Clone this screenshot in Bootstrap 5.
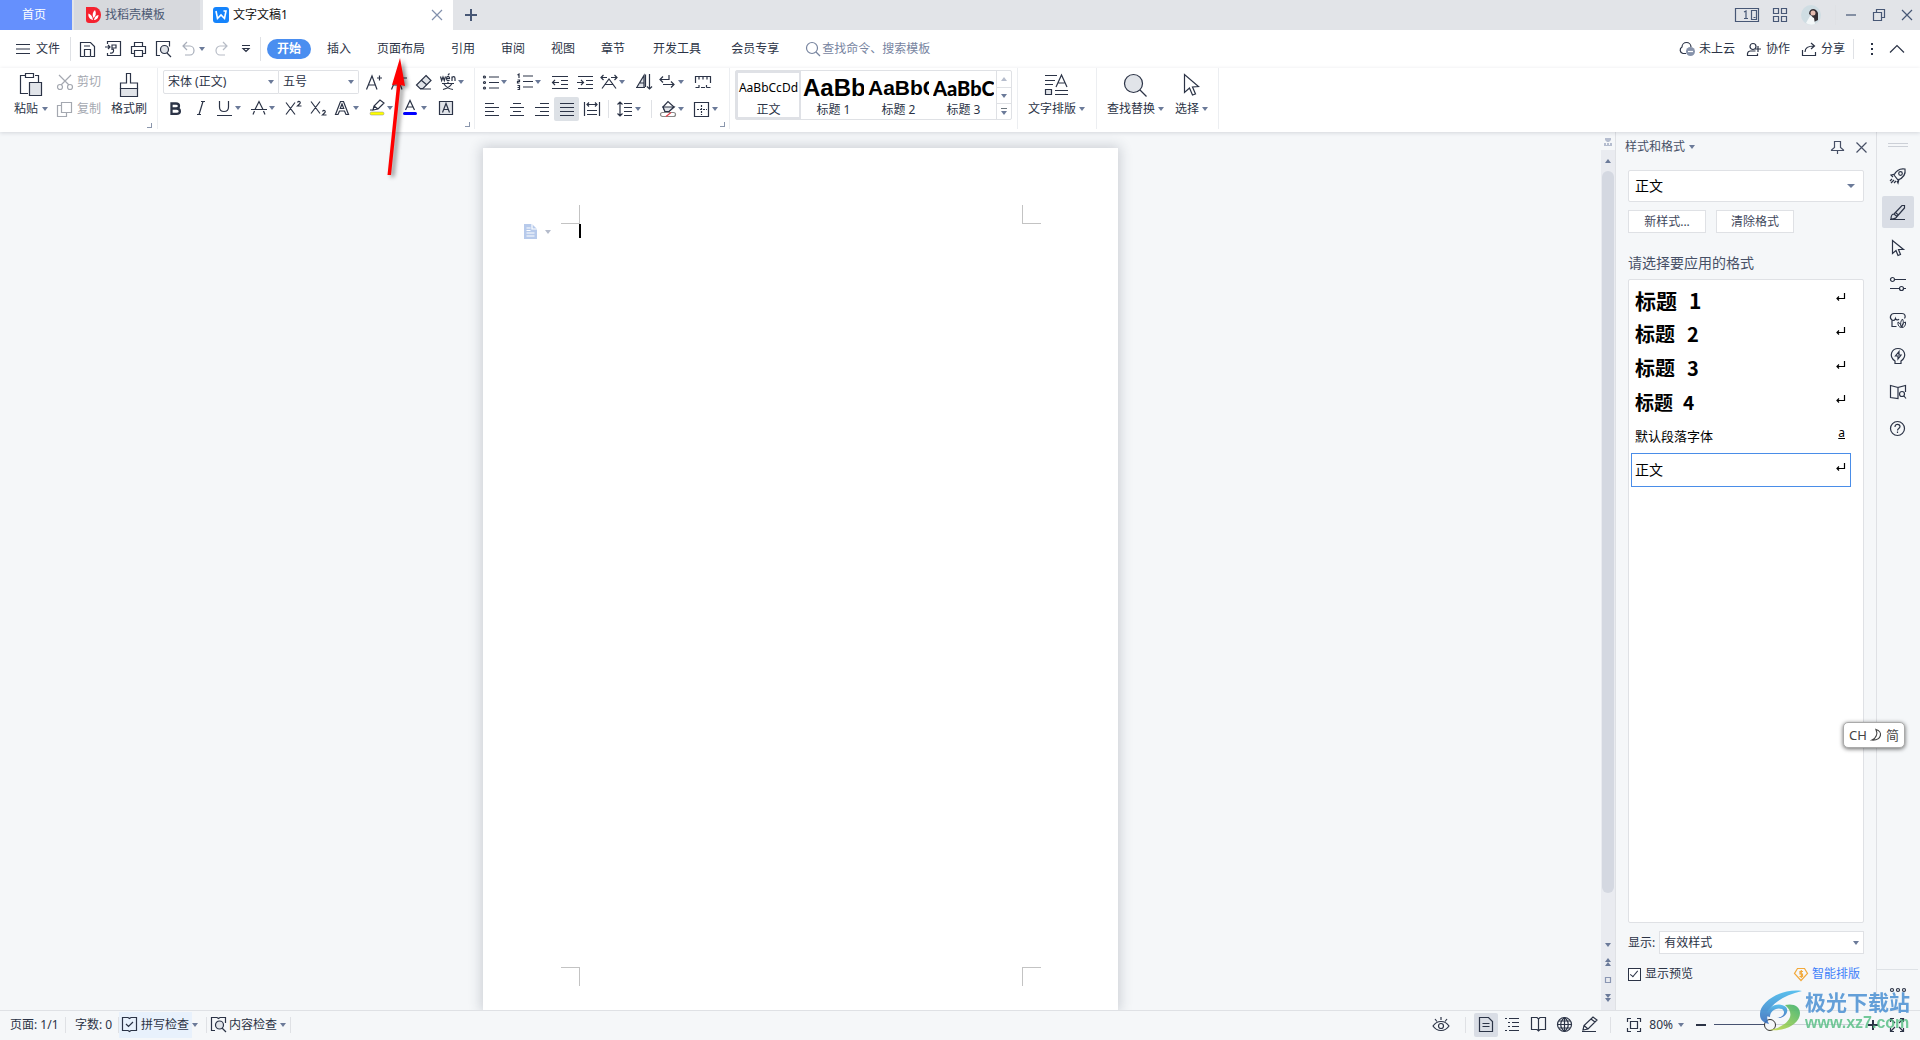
<!DOCTYPE html>
<html lang="zh-CN">
<head>
<meta charset="utf-8">
<meta name="viewport" content="width=device-width, initial-scale=1">
<title>文字文稿1</title>
<link href="https://cdn.jsdelivr.net/npm/bootstrap@5.3.0/dist/css/bootstrap.min.css" rel="stylesheet">
<style>
:root{--ink:#2b3346;--soft:#6b7a99;--line:#dfe1e5;--pale:#f5f7f9}
body{font:12px/16px "Noto Sans","Noto Sans CJK SC",sans-serif;color:var(--ink);background:var(--pale);overflow:hidden}
body,button,select,input{font-family:"Noto Sans","Noto Sans CJK SC",sans-serif}
button{border:0;background:none;padding:0;color:inherit;font-size:12px;line-height:16px;white-space:nowrap}
a{color:inherit;text-decoration:none}
svg{display:block;flex:none;fill:none;stroke:currentColor;stroke-width:1.2;overflow:visible}
svg.pic{stroke:none}
svg .fl{fill:#e1e4e9}
svg .solid{fill:currentColor;stroke:none}
.tri{display:block;flex:none;width:0;height:0;border:3px solid transparent;border-top:4px solid var(--soft);border-bottom:0}
.tri.up{border-top:0;border-bottom:4px solid var(--soft)}
.rule{width:1px;background:var(--line);flex:none}
/* title bar */
.titlebar{height:30px;background:#e2e4e8;color:#475775}
.doc-tab{height:30px;gap:4px}
.tab-home{width:72px;background:#6590fd;color:#fff;padding-right:4px}
.tab-shop{width:126px;background:#d7d9dd;color:#4b5873;padding-left:12px;margin-left:2px}
.tab-doc{width:250px;background:#fff;color:#111;padding:0 11px 0 10px;margin-left:3px}
.win{gap:17px;padding-right:8px}
.win-apps{gap:14px;margin-right:-7px}
/* menu */
.menubar{height:38px;background:#fff}
.quick{gap:10px;padding-left:9px;width:189px}
.menu-tab{padding:0 13px}
.menu-tab.active{background:#4a8ef0;color:#fff;font-weight:700;border-radius:10px;height:20px;padding:0 10px;margin:0 3px 0 6px}
.menu-tab.menu-wide{padding:0 15px}
.menu-find{color:#77849f;margin-left:12px}
/* ribbon */
.ribbon{height:64px;background:#fff;box-shadow:0 1px 4px rgba(40,50,70,.16);z-index:2;position:relative}
.ribbon .rule{height:61px;background:#eceef1}
.group{padding:5px 0 0 10px}
.tools{height:26px}
.tool{width:25px;height:24px;display:flex;align-items:center;justify-content:center;flex:none}
.tool.dd{width:34px;padding:0 6px 0 4px;justify-content:space-between}
.tool.on{background:#dde1e6;border-radius:2px}
.tools .rule{height:18px;margin:0 4px;background:var(--line)}
.corner{width:5px;height:5px;border:solid #8a96ac;border-width:0 1px 1px 0}
.big{height:44px;display:flex;flex-direction:column;align-items:center;justify-content:space-between}
.clip{height:44px;color:#a4a8b0;gap:11px;padding:0 2px 0 9px}
.pick{position:relative;background:#fff;border:1px solid var(--line)}
.pick select{appearance:none;border:0;background:none;width:100%;height:100%;padding:0 4px;font-size:12px;color:var(--ink);outline:0}
.pick::after{content:"";position:absolute;right:4px;top:50%;margin-top:-2px;border:3px solid transparent;border-top:4px solid var(--soft);border-bottom:0;pointer-events:none}
.pick-font{width:116px;height:24px;border-radius:2px 0 0 2px}
.pick-size{width:80px;height:24px;border-left:0;border-radius:0 2px 2px 0;margin-right:2px}
.gallery{height:50px;border:1px solid var(--line);border-radius:2px}
.sample{width:65px;height:48px;overflow:hidden;display:flex;flex-direction:column;justify-content:space-between;align-items:center;padding-bottom:1px}
.sample .pv{display:block;width:61px;height:30px;line-height:34px;overflow:hidden;color:#000;text-align:left}
.sample.on{outline:2px solid #dfe1e6;outline-offset:-2px}
.sample .pv-n{font-size:12px;text-align:center}
.pv-1{font:700 24px "Liberation Sans",sans-serif}
.pv-2{font:700 21px "Liberation Sans",sans-serif}
.pv-3{font:900 20px Lato,sans-serif}
.gal-nav{width:15px;border-left:1px solid var(--line)}
.gal-nav button{height:16px;display:flex;flex-direction:column;align-items:center;justify-content:center;gap:2px;width:100%}
.gal-nav button+button{border-top:1px solid var(--line)}
/* work area */
.canvas{padding-top:16px}
.sheet{width:635px;background:#fff;box-shadow:0 0 12px 2px rgba(40,50,70,.2);padding:57px 0 24px}
.marks{padding:0 77px 0 78px}
.mk{width:19px;height:19px;border:0 solid #c3c3c3}
.mk-tl{border-width:0 1px 1px 0}.mk-tr{border-width:0 0 1px 1px}
.mk-bl{border-width:1px 1px 0 0}.mk-br{border-width:1px 0 0 1px}
.entry{padding-left:41px;height:15px}
.caret-bar{width:2px;height:14px;background:#000}
.scroller{width:14px;color:#8a96b3}
.track{background:#e9ebf0}
.track-top{height:21px}
.thumb{height:94.5%;width:12px;border-radius:6px;background:#d4d8e1}
.track-end{gap:11px;padding:8px 0}
.side{width:261px;border-left:1px solid var(--line);padding:0 12px}
.side-head{height:30px;margin:0 -3px;color:#475066}
.side .pick-now{height:32px;border-radius:2px}
.pick-now select{font-size:14px;color:#000;padding:0 6px}
.pick-now::after{right:8px;border-width:4px 4px 0}
.flat{width:78px;height:23px;background:#fff;border:1px solid var(--line);color:#3f485c}
.ask{font-size:14px;color:#475066;padding:22px 0 8px}
.list{background:#fff;border:1px solid var(--line);border-radius:2px;padding:3px 2px}
.list button{width:220px;height:34px;padding:0 5px 0 3px;display:flex;align-items:center;justify-content:space-between;color:#000;border:1px solid transparent;border-radius:0}
.list button.on{border-color:#4a8de8}
.list button svg,.list u{margin-bottom:6px}
.t-head{display:flex;gap:12px;font:700 21px/24px "Noto Sans CJK SC",sans-serif}
.t-sub{font-size:20px}
.t-min{font-size:19px;gap:10px}
.t-body{font-size:14px}
.t-def{font-size:13px}
.pick-show{height:23px}
.side-foot{height:56px;padding-bottom:16px}
.tick{appearance:none;width:13px;height:13px;border:1px solid var(--ink);background:#fff;margin:0;position:relative}
.tick:checked::after{content:"";position:absolute;left:3px;top:0;width:4px;height:8px;border:solid var(--ink);border-width:0 1px 1px 0;transform:rotate(40deg)}
.rail{width:44px;border-left:1px solid var(--line);padding:11px 2px 0 0;gap:4px}
.rail button{width:32px;height:32px;display:flex;align-items:center;justify-content:center;border-radius:2px}
.rail button.on{background:#d9dde5}
.grip{width:20px;height:4px;border:solid #ccd0d7;border-width:1px 0;margin-bottom:9px}
/* status bar */
.status{height:30px;border-top:1px solid var(--line);padding:0 16px 2px 0}
.status .rule{height:16px}
.hl{background:#e8f1fc;height:26px;padding:0 3px;gap:3px}
.modes{gap:2px}
.modes button{width:24px;height:24px;display:flex;align-items:center;justify-content:center}
.modes .on{background:#d9dde5;border-radius:2px}
.zoomer{appearance:none;width:150px;height:14px;background:linear-gradient(to right,#465270 36%,#ccd0d8 36%) center/100% 1px no-repeat;outline:0}
.zoomer::-webkit-slider-thumb{appearance:none;width:12px;height:12px;border-radius:50%;border:1px solid #333;background:var(--pale)}
/* floating layers */
.pointer{position:absolute;left:380px;top:58px;z-index:5;filter:drop-shadow(3px 2px 2px rgba(0,0,0,.45));pointer-events:none}
.ime{position:absolute;right:15px;top:722px;width:62px;height:26px;background:#fff;border:1px solid #aaa;border-radius:5px;box-shadow:0 1px 4px rgba(0,0,0,.6);gap:4px;z-index:4;color:#444;font-size:13px}
.brand{position:absolute;right:10px;bottom:7px;z-index:6;pointer-events:none;opacity:.85;gap:2px}
.brand-cn{font:700 21px/24px "Noto Sans CJK SC",sans-serif;color:#4a90d3}
.brand-en{font:700 16px/20px "Liberation Sans",sans-serif;color:#5cc088}
</style>
<script src="https://cdn.jsdelivr.net/npm/bootstrap@5.3.0/dist/js/bootstrap.bundle.min.js"></script>
</head>
<body class="vh-100 d-flex flex-column position-relative">

<header class="titlebar d-flex align-items-center flex-shrink-0">
  <button class="doc-tab tab-home">首页</button>
  <button class="doc-tab tab-shop d-flex align-items-center">
    <svg class="pic" width="15" height="16" viewBox="0 0 15 16"><path d="M0 0h8a7 8 0 0 1 0 16H3a3 3 0 0 1-3-3z" fill="#f5222f"/><path d="M7 13C3 12 2 9 2.500 6.500 5 7.500 6.500 9 7 13zM7.500 11C6 8 6.500 5 9 3c1.500 3 1 6-1.500 8zM8 13c.5-3 2-4.500 4.500-5 0 2.500-1.500 5-4.500 5z" fill="#fff"/></svg>找稻壳模板</button>
  <div class="doc-tab tab-doc d-flex align-items-center">
    <svg class="pic" width="16" height="16" viewBox="0 0 16 16"><rect width="16" height="16" rx="3" fill="#1584fc"/><path d="M3 4l1.500 7.500L8 8l3.500 3.500L13 4h-2.500" fill="none" stroke="#fff" stroke-width="1.600"/></svg>
    <span>文字文稿1</span>
    <button class="ms-auto" aria-label="关闭标签"><svg width="10" height="10" style="color:#8290ad"><path d="M0 0l10 10M10 0L0 10"/></svg></button>
  </div>
  <button class="ms-2 ps-1" aria-label="新建"><svg width="12" height="12"><path d="M6 0v12M0 6h12" stroke-width="2"/></svg></button>
  <div class="win ms-auto d-flex align-items-center">
    <div class="win-apps d-flex align-items-center">
      <button aria-label="窗口"><svg width="24" height="14"><path d="M.5.5h23v13H.5zM16.500 2.500h5v9h-5zM18.500 9.500h2M9 4l2-1v7M9 10.500h4"/></svg></button>
      <button aria-label="应用"><svg width="14" height="14"><path d="M.5.5h5v5h-5zM8.500.5h5v5h-5zM.5 8.500h5v5h-5zM8.500 8.500h5v5h-5z"/></svg></button>
      <button aria-label="账号"><svg class="pic" width="20" height="20"><circle cx="10" cy="10" r="10" fill="#cfdde3"/><path d="M8 9c0-6 7-7 9-1l0 7-4 2-2-6z" fill="#332e33"/><circle cx="12" cy="8" r="2.500" fill="#e5bcb0"/><path d="M5 18l4-7 4 2 1 6c-3 1-6 1-9-1z" fill="#f3f7f8"/></svg></button>
      <i class="rule" style="height:20px"></i>
    </div>
    <button aria-label="最小化"><svg width="10" height="10"><path d="M0 5h10"/></svg></button>
    <button aria-label="还原"><svg width="12" height="12"><path d="M.5 3.500h8v8h-8zM3.500 3.500v-3h8v8h-3"/></svg></button>
    <button aria-label="关闭"><svg width="10" height="10"><path d="M0 0l10 10M10 0L0 10"/></svg></button>
  </div>
</header>

<nav class="menubar d-flex align-items-center flex-shrink-0">
  <button class="d-flex align-items-center ps-3" style="width:70px;gap:6px"><svg width="14" height="10"><path d="M0 .5h14M0 5h14M0 9.500h14"/></svg>文件</button>
  <i class="rule" style="height:24px"></i>
  <div class="quick d-flex align-items-center">
    <button aria-label="保存"><svg width="15" height="15"><path d="M4 14.500H.5V.5h10l4 4v10H11M4.500 14.500v-7h6v7M4 4h6M4.500 14.500h6"/></svg></button>
    <button aria-label="输出PDF"><svg width="16" height="16"><path d="M2.500 3V.5h13v14h-13V12M0 6h5M3 4l2 2-2 2M7 9V4h4v3H7M5 12c4 1 4-3 3-4"/></svg></button>
    <button aria-label="打印"><svg width="15" height="15"><path d="M3.500 4.500v-4h8v4M3 11.500H.5v-7h14v7H12M3.500 8.500h8v6h-8z"/></svg></button>
    <button aria-label="打印预览"><svg width="16" height="16"><path d="M4 14.500H.5V.5h13v5M11 12l4 4"/><circle class="fl" cx="8.500" cy="8.500" r="4"/></svg></button>
    <button class="d-flex align-items-center gap-1" style="color:#a7adb9" aria-label="撤销"><svg width="13" height="14"><path d="M5 0L1 4l4 4M1 4h7a4 4.500 0 0 1 0 9H3"/></svg><i class="tri"></i></button>
    <button style="color:#b7bcc6" aria-label="恢复"><svg width="13" height="14"><path d="M8 0l4 4-4 4M12 4H5a4 4.500 0 0 0 0 9h5"/></svg></button>
    <button class="ms-1" aria-label="更多"><svg width="8" height="8"><path d="M0 .5h8M1 3.500l3 3 3-3z"/></svg></button>
  </div>
  <i class="rule" style="height:24px"></i>
  <button class="menu-tab active">开始</button>
  <button class="menu-tab">插入</button>
  <button class="menu-tab">页面布局</button>
  <button class="menu-tab">引用</button>
  <button class="menu-tab">审阅</button>
  <button class="menu-tab">视图</button>
  <button class="menu-tab">章节</button>
  <button class="menu-tab menu-wide">开发工具</button>
  <button class="menu-tab menu-wide">会员专享</button>
  <button class="menu-find d-flex align-items-center"><svg width="16" height="14"><circle cx="6" cy="6" r="5.500"/><path d="M10 10l4 4"/></svg>查找命令、搜索模板</button>
  <div class="ms-auto d-flex align-items-center gap-2 pe-3">
    <button class="d-flex align-items-center gap-1 me-1"><svg width="16" height="14"><path d="M7 11.500H4A3.500 3.500 0 0 1 3 5a4.500 4.500 0 0 1 9 0"/><circle cx="11.500" cy="9.500" r="4.500" fill="#8793ab" stroke="none"/><path d="M9 9.500h5" stroke="#fff"/></svg>未上云</button>
    <button class="d-flex align-items-center gap-1 me-1"><svg width="15" height="13"><circle cx="6" cy="3.500" r="3"/><path d="M8.500 12.500H.5v-2A3 3 0 0 1 3.500 8h5M8.500 12.500h2v-2M11 3v6M8 6h6"/></svg>协作</button>
    <button class="d-flex align-items-center gap-1"><svg width="15" height="13"><path d="M.5 7v5.500h13V9M3 9c0-4 3-6 9-6M9 0l3.500 3L9 6"/></svg>分享</button>
    <i class="rule" style="height:20px"></i>
    <button class="ps-2" aria-label="更多选项"><svg width="4" height="12"><path class="solid" d="M1 0h2v2H1zM1 5h2v2H1zM1 10h2v2H1z"/></svg></button>
    <button class="ps-2" aria-label="折叠功能区"><svg width="14" height="8"><path d="M0 7.500l7-7 7 7"/></svg></button>
  </div>
</nav>

<section class="ribbon d-flex flex-shrink-0">
  <div class="group d-flex align-items-start" style="width:157px">
    <button class="big ps-1"><svg width="22" height="24"><path d="M5 2.500H.5v18H8M15 2.500h3.500V9M5.500.5h8v4h-8z"/><path class="fl" d="M9.500 9.500h12v13h-12z"/></svg><span class="d-flex align-items-center gap-1">粘贴<i class="tri"></i></span></button>
    <div class="clip d-flex flex-column justify-content-end">
      <button class="d-flex align-items-center gap-1"><svg width="16" height="15"><path d="M2 0l10 10M14 0L4 10"/><circle cx="3" cy="12" r="2.500"/><circle cx="13" cy="12" r="2.500"/></svg>剪切</button>
      <button class="d-flex align-items-center gap-1"><svg width="16" height="15"><path d="M4 3.500H.5v11h9V11M4.500.5h10v10h-10z"/></svg>复制</button>
    </div>
    <button class="big ms-2"><svg width="18" height="24"><path d="M6.500 10V.5h4V10h7v5.500H.5V10z"/><path class="fl" d="M.5 15.500h17v8H.5z"/></svg><span>格式刷</span></button>
    <i class="corner align-self-end mb-1"></i>
  </div>
  <i class="rule"></i>
  <div style="width:316px;padding:2px 0 0 5px">
    <div class="tools d-flex">
      <div class="pick pick-font"><select aria-label="字体"><option>宋体 (正文)</option></select></div>
      <div class="pick pick-size"><select aria-label="字号"><option>五号</option></select></div>
      <button class="tool" aria-label="增大字号"><svg width="16" height="15"><path d="M.5 14.500L6 1l5 13.500M2.500 10h7M11 3h5M13.500.5v5"/></svg></button>
      <button class="tool" aria-label="减小字号"><svg width="16" height="15"><path d="M.5 14.500L6 1l5 13.500M2.500 10h7M11 3h5"/></svg></button>
      <button class="tool" aria-label="清除格式"><svg width="16" height="15"><path class="fl" d="M10 .5l5 5-8 8H4l-3.500-3.500z"/><path d="M5 5l6 5M4 14h11"/></svg></button>
      <button class="tool dd" aria-label="拼音"><svg width="16" height="16"><path d="M.5 2.500l1.200 4L3 3l1.300 3.500 1.200-4M6.500 4.500h3c0-3-3-2.500-3 0s2 2.500 3 1.500M12 7V2.500M12 4.500c0-2.500 3-2.500 3 0V7M8 1l1.500-1.500M2 9.500h12M8 8v1.500M3 15.500c4-1 7-2.500 9-6M4 10c2 3 5 5 9 5.500"/></svg><i class="tri"></i></button>
    </div>
    <div class="tools d-flex">
      <button class="tool" aria-label="加粗"><svg width="11" height="13"><path d="M1.500 1.500H6c4 0 4 5 0 5H1.500zM1.500 6.500h5c4.500 0 4.500 5.300 0 5.300h-5z" stroke-width="2.300"/></svg></button>
      <button class="tool" aria-label="倾斜"><svg width="8" height="14"><path d="M6 .5L2 13.500M4 .5h4M0 13.500h4"/></svg></button>
      <button class="tool dd" aria-label="下划线"><svg width="15" height="15"><path d="M2.500 0v6c0 6 9 6 9 0V0M0 14.500h15"/></svg><i class="tri"></i></button>
      <button class="tool dd" aria-label="删除线"><svg width="16" height="14"><path d="M4 8.500L8 .5l4 8M2 13.500L3.500 10M14 13.500L12.500 10M0 8.500h16"/></svg><i class="tri"></i></button>
      <button class="tool" aria-label="上标"><svg width="16" height="14"><path d="M0 1.500l9 12M9 1.500l-9 12M11.500 1.500c1-2 3.500-1 2.500 1L11.500 5h4"/></svg></button>
      <button class="tool" aria-label="下标"><svg width="16" height="14"><path d="M0 .5l9 12M9 .5l-9 12M11.500 10.500c1-2 3.500-1 2.500 1L11.500 14h4"/></svg></button>
      <button class="tool dd" aria-label="文字效果"><svg width="14" height="14"><path d="M.5 13.500L5.500.5h3l5 13H11L9.500 10H4.500L3 13.500zM5.300 7.500h3.400L7 3z"/></svg><i class="tri"></i></button>
      <button class="tool dd" aria-label="突出显示"><svg width="16" height="16"><path d="M4 10l1-4 6-6 4 3-6 6zM5 6l4 3M4 10H1"/><rect x="1" y="12" width="14" height="3" rx="1.500" fill="#ff0" stroke="#888" stroke-width=".5"/></svg><i class="tri"></i></button>
      <button class="tool dd" aria-label="字体颜色"><svg width="14" height="16"><path d="M2.500 10L7 .5l4.500 9.500M4 7h6"/><rect y="12" width="14" height="3" rx="1.500" fill="#00f" stroke="none"/></svg><i class="tri"></i></button>
      <button class="tool" aria-label="字符底纹"><svg width="14" height="14"><path class="fl" d="M.5.5h13v13H.5z"/><path d="M3.500 11.500L7 2.500l3.500 9M4.500 8.500h5"/></svg></button>
    </div>
    <i class="corner d-block ms-auto me-1"></i>
  </div>
  <i class="rule"></i>
  <div style="width:254px;padding:2px 0 0 4px">
    <div class="tools d-flex">
      <button class="tool dd" aria-label="项目符号"><svg width="16" height="15"><path d="M6 2h10M6 7.500h10M6 13h10"/><circle cx="1.500" cy="2" r="1"/><circle cx="1.500" cy="7.500" r="1"/><circle cx="1.500" cy="13" r="1"/></svg><i class="tri"></i></button>
      <button class="tool dd" aria-label="编号"><svg width="16" height="16"><path d="M6 2h10M6 7.500h10M6 13h10M.5 1L2 0v4M.5 6h2v1.500h-2V9h2M.5 11.500h2v4h-2M.5 13.500h2"/></svg><i class="tri"></i></button>
      <button class="tool" aria-label="减少缩进"><svg width="16" height="13"><path d="M0 .5h16M9 4.500h7M9 8.500h7M0 12.500h16M0 6.500h7M3 4L.5 6.500 3 9"/></svg></button>
      <button class="tool" aria-label="增加缩进"><svg width="16" height="13"><path d="M1 .5h15M9 4.500h7M9 8.500h7M1 12.500h15M0 6.500h7M4 4l2.500 2.500L4 9"/></svg></button>
      <button class="tool dd" aria-label="字符缩放"><svg width="16" height="14"><path d="M1 13.500L8 4l7 9.500M4 9.500h8M0 2.500h6M2.500 0L0 2.500 2.500 5M10 2.500h6M13.500 0L16 2.500 13.500 5"/></svg><i class="tri"></i></button>
      <button class="tool" aria-label="排序"><svg width="16" height="16"><path class="fl" d="M1 13L8 1.500V13M4 9h4M9.500 13V.5"/><path d="M0 13.500h9M13.500 0v15M11 12.500l2.500 2.500 2.500-2.500"/></svg></button>
      <button class="tool dd" aria-label="换行"><svg width="15" height="14"><path d="M9 0v4.500H0M3 1.500l-3 3 3 3M3 9.500h11M11 6.500l3 3-3 3"/></svg><i class="tri"></i></button>
      <button class="tool" aria-label="标尺"><svg width="16" height="12"><path d="M.5 7V.5h15V7M4 .5v3M8 .5v3M12 .5v3M.5 11.500h4M6 11.500h4M11.500 11.500h4M4 9v2.500M11.500 9v2.500"/></svg></button>
    </div>
    <div class="tools d-flex align-items-center">
      <button class="tool" aria-label="左对齐"><svg width="14" height="13"><path d="M0 .5h9M0 4.500h14M0 8.500h9M0 12.500h14"/></svg></button>
      <button class="tool" aria-label="居中"><svg width="14" height="13"><path d="M3 .5h8M0 4.500h14M3 8.500h8M0 12.500h14"/></svg></button>
      <button class="tool" aria-label="右对齐"><svg width="14" height="13"><path d="M5 .5h9M0 4.500h14M5 8.500h9M0 12.500h14"/></svg></button>
      <button class="tool on" aria-label="两端对齐"><svg width="14" height="13"><path d="M0 .5h14M0 4.500h14M0 8.500h14M0 12.500h14"/></svg></button>
      <button class="tool" aria-label="分散对齐"><svg width="16" height="14"><path d="M.5 0v14M15.500 0v14M3 2.500h10M5 .5l-2 2 2 2M11 .5l2 2-2 2M3 8.500h10M3 12.500h10"/></svg></button>
      <i class="rule"></i>
      <button class="tool dd" aria-label="行距"><svg width="15" height="14"><path d="M3 0v14M.5 2.500L3 0l2.500 2.500M.5 11.500L3 14l2.500-2.500M7 1.500h8M7 5.500h8M7 9.500h8M7 13.500h8"/></svg><i class="tri"></i></button>
      <i class="rule"></i>
      <button class="tool dd" aria-label="底纹"><svg width="16" height="16"><path d="M3 6l5-5.500L14 6 9 10.500H5z"/><path class="fl" d="M3 6h11l-5 4.500H5z"/><rect x=".5" y="11.500" width="15" height="4" rx="2" stroke="#888" fill="#fff"/><path d="M6 15.500l5-4" stroke="#e0404a"/></svg><i class="tri"></i></button>
      <button class="tool dd" aria-label="边框"><svg width="15" height="15"><path d="M.5.5h14v14H.5z"/><path d="M7.500 3v10M3 7.500h10" stroke-dasharray="2 1"/></svg><i class="tri"></i></button>
    </div>
    <i class="corner d-block ms-auto me-1"></i>
  </div>
  <i class="rule"></i>
  <div style="padding:2px 5px 0 5px">
    <div class="gallery d-flex">
      <button class="sample on"><span class="pv pv-n">AaBbCcDd</span><span>正文</span></button>
      <button class="sample"><span class="pv pv-1">AaBb</span><span>标题 1</span></button>
      <button class="sample"><span class="pv pv-2">AaBbC</span><span>标题 2</span></button>
      <button class="sample"><span class="pv pv-3">AaBbCc</span><span>标题 3</span></button>
      <div class="gal-nav"><button aria-label="上一行"><i class="tri up opacity-50"></i></button><button aria-label="下一行"><i class="tri"></i></button><button aria-label="全部样式"><i class="border-top border-secondary" style="width:6px"></i><i class="tri"></i></button></div>
    </div>
  </div>
  <i class="rule"></i>
  <div class="group d-flex" style="width:78px">
    <button class="big"><svg width="23" height="24"><path d="M0 2.500h12M0 7.500h10M0 11.500h8M11 14l5.500-12L22 14M13.500 10h6M10 17.500h13M10 21.500h13"/><path class="fl" d="M.5 16.500h6v5h-6z"/></svg><span class="d-flex align-items-center" style="gap:3px">文字排版<i class="tri"></i></span></button>
  </div>
  <i class="rule"></i>
  <div class="group d-flex" style="width:121px;gap:11px">
    <button class="big"><svg width="23" height="24"><circle class="fl" cx="9.500" cy="10.500" r="9"/><path d="M16 17l6.500 6.500"/></svg><span class="d-flex align-items-center" style="gap:3px">查找替换<i class="tri"></i></span></button>
    <button class="big"><svg width="15" height="24"><path d="M.5 1.500v18l5-4.500 3 7 3-1-3-7 6-.5z"/></svg><span class="d-flex align-items-center" style="gap:3px">选择<i class="tri"></i></span></button>
  </div>
  <i class="rule"></i>
</section>

<main class="d-flex flex-grow-1" style="min-height:0">
  <div class="canvas flex-grow-1 d-flex justify-content-center overflow-hidden">
    <article class="sheet d-flex flex-column">
      <div class="marks d-flex justify-content-between"><i class="mk mk-tl"></i><i class="mk mk-tr"></i></div>
      <div class="entry d-flex">
        <button class="d-flex align-items-center gap-2" style="width:55px" aria-label="粘贴选项"><svg width="13" height="15"><path d="M0 0h8l5 5v10H0z" fill="#b7caeb" stroke="none"/><path d="M8 0v5h5M2.500 4h4M2.500 6.500h4M2.500 9h8M2.500 12h8" stroke="#fff"/></svg><i class="tri opacity-50"></i></button>
        <i class="caret-bar"></i>
      </div>
      <div class="marks d-flex justify-content-between mt-auto"><i class="mk mk-bl"></i><i class="mk mk-br"></i></div>
    </article>
  </div>

  <div class="scroller d-flex flex-column align-items-center">
    <svg width="8" height="18" viewBox="0 0 8 18"><path class="solid" opacity=".6" d="M1 6h6v2L5 10H3L1 8zM0 13h8v1H0zM0 11h2v3H0zM3 11h2v3H3zM6 11h2v3H6z"/></svg>
    <div class="track w-100 flex-grow-1 d-flex flex-column align-items-center">
      <div class="track-top d-flex align-items-center"><i class="tri up"></i></div>
      <div class="flex-grow-1"><div class="thumb"></div></div>
      <div class="track-end d-flex flex-column align-items-center">
        <i class="tri"></i>
        <span><i class="tri up"></i><i class="tri up"></i></span>
        <svg width="6" height="6"><path d="M.5.5h5v5h-5z"/></svg>
        <span><i class="tri"></i><i class="tri"></i></span>
      </div>
    </div>
  </div>

  <aside class="side d-flex flex-column">
    <div class="side-head d-flex align-items-center">
      <span class="d-flex align-items-center gap-1">样式和格式<i class="tri"></i></span>
      <button class="ms-auto" aria-label="固定"><svg width="13" height="13"><path d="M3.500.5h6v6l3 2.500v.5H.5V9l3-2.500zM6.500 9.500V13"/></svg></button>
      <button class="ms-2 ps-1" aria-label="关闭窗格"><svg width="11" height="11"><path d="M.5.5l10 10M10.500.5l-10 10"/></svg></button>
    </div>
    <div class="pick pick-now mt-2"><select aria-label="当前样式"><option>正文</option></select></div>
    <div class="d-flex pt-2" style="gap:10px"><button class="flat">新样式...</button><button class="flat">清除格式</button></div>
    <div class="ask">请选择要应用的格式</div>
    <div class="list flex-grow-1">
      <button><span class="t-head"><span>标题</span> <span>1</span></span><svg width="9" height="8"><path d="M8.500 0v5.500H1M3 3.500l-2 2 2 2"/></svg></button>
      <button><span class="t-head t-sub"><span>标题</span> <span>2</span></span><svg width="9" height="8"><path d="M8.500 0v5.500H1M3 3.500l-2 2 2 2"/></svg></button>
      <button><span class="t-head t-sub"><span>标题</span> <span>3</span></span><svg width="9" height="8"><path d="M8.500 0v5.500H1M3 3.500l-2 2 2 2"/></svg></button>
      <button><span class="t-head t-min"><span>标题</span> <span>4</span></span><svg width="9" height="8"><path d="M8.500 0v5.500H1M3 3.500l-2 2 2 2"/></svg></button>
      <button><span class="t-def">默认段落字体</span><u>a</u></button>
      <button class="on"><span class="t-body">正文</span><svg width="9" height="8"><path d="M8.500 0v5.500H1M3 3.500l-2 2 2 2"/></svg></button>
    </div>
    <div class="d-flex align-items-center pt-2 gap-1"><label for="show">显示:</label><div class="pick pick-show flex-grow-1"><select id="show"><option>有效样式</option></select></div></div>
    <div class="side-foot d-flex align-items-center">
      <input class="tick" type="checkbox" id="pre" checked><label class="ps-1" for="pre">显示预览</label>
      <a href="#" class="ms-auto me-1 d-flex align-items-center gap-1" style="color:#417ff9"><svg width="14" height="13" style="color:#f2a93b"><path d="M3.500.5h7l3 5L7 12.500.5 5.500z"/><path d="M9 3.500H6V6h2.500v2.500h-3M7.300 2v8"/></svg>智能排版</a>
    </div>
  </aside>

  <div class="rail d-flex flex-column align-items-center">
    <i class="grip"></i>
    <button aria-label="快捷"><svg width="16" height="16"><path d="M15 1C9 0 6 3 4 7l4 5c5-2 8-5 7-11zM5 6L1 7l2 2M9 11l-1 4-1-2M2 11l-2 2M4 12l-3 3M6 13l-2 2"/><circle cx="10.500" cy="5.500" r="1.800"/></svg></button>
    <button class="on" aria-label="样式和格式"><svg width="16" height="15"><path d="M0 14.500h15M1 14c0-4 1-5 3-5l3 2.500C6 14 4 14 1 14zM4 9l8-8.500h2.500V3L7 11.500M6 8l2.500 2"/></svg></button>
    <button aria-label="选择"><svg width="12" height="16"><path d="M.5.5v13l3.500-3 2 5 2.500-1-2-5h5z"/></svg></button>
    <button aria-label="属性"><svg width="16" height="14"><circle cx="2.500" cy="2.500" r="2"/><circle cx="11.500" cy="11.500" r="2"/><path d="M4.500 2.500H16M0 11.500h9.500M13.500 11.500H16"/></svg></button>
    <button aria-label="稻壳"><svg width="16" height="15"><path d="M6.500 13.500H2V7C-1 5 .5.5 4 .5h8c3 0 4 3 2.500 5M2 7c2 1 3 0 3.500-1.500C6 7 8 7.500 9 6"/><path d="M8 9c2 1 3 3 3.500 5.500C9 14.500 7.500 12 8 9zM11.500 14C10 11 10.500 8 12.500 6c1.500 3 1 6-1 8zM12 14.500c0-3 1-5 3.500-5.500.5 3-1 5.500-3.500 5.500z" stroke-width="1"/></svg></button>
    <button aria-label="推荐"><svg width="14" height="16"><path d="M4 13C-3 8 1 .5 7 .5S17 8 10 13v2.500H4zM8 3.500L4.500 8H7v3l3-4H8z"/></svg></button>
    <button aria-label="查找"><svg width="16" height="14"><path d="M8 2.500L.5.5v12l7.500 1V2.500l7.500-2V7"/><circle cx="12" cy="9" r="2.500"/><path d="M14 11l2 2.500"/></svg></button>
    <button aria-label="帮助"><svg width="15" height="15"><circle cx="7.500" cy="7.500" r="7"/><path d="M5 6c0-4 5-3 5-.5 0 2-2.500 2-2.500 4M7.500 10.500V12"/></svg></button>
    <i class="mt-auto border-top w-100"></i>
    <button class="mb-1" aria-label="更多工具"><svg width="16" height="4"><circle cx="2" cy="2" r="1.500"/><circle cx="8" cy="2" r="1.500"/><circle cx="14" cy="2" r="1.500"/></svg></button>
  </div>
</main>

<footer class="status d-flex align-items-center flex-shrink-0">
  <span style="width:65px;padding-left:10px">页面: 1/1</span><i class="rule"></i>
  <span style="width:52px;padding-left:9px">字数: 0</span><i class="rule"></i>
  <button class="d-flex align-items-center"><span class="hl d-flex align-items-center"><svg width="16" height="15"><path d="M6 .5H.5v13H6l1.500 1 1.500-1h5.500V.5H9l-1.500 1zM4 7l2.500 2.500L11 5"/></svg>拼写检查</span><i class="tri"></i></button>
  <i class="rule ms-2"></i>
  <button class="d-flex align-items-center ps-1" style="gap:3px"><svg width="15" height="15"><path d="M4 13.500H.5V.5H6l1.500 1L9 .5h5.500V6M11 11l4 4"/><circle class="fl" cx="8.500" cy="8" r="4"/></svg>内容检查<i class="tri"></i></button>
  <i class="rule ms-1"></i>
  <div class="ms-auto d-flex align-items-center">
    <button class="me-3" aria-label="护眼模式"><svg width="16" height="15"><path d="M0 9c4-6 12-6 16 0-4 6-12 6-16 0zM8 0v3M2 2l2 2.500M14 2l-2 2.500"/><circle cx="8" cy="9" r="2.500"/></svg></button>
    <i class="rule me-2"></i>
    <div class="modes d-flex">
      <button class="on" aria-label="页面视图"><svg width="14" height="15"><path d="M.5.5h9l4 4v10H.5zM3.500 6.500h7M3.500 9.500h7"/></svg></button>
      <button aria-label="大纲"><svg width="14" height="13"><path d="M0 .5h2M4 .5h10M3 4.500h2M7 4.500h7M3 8.500h2M7 8.500h7M0 12.500h2M4 12.500h10"/></svg></button>
      <button aria-label="阅读版式"><svg width="15" height="15"><path d="M.5.5H6L7.500 2 9 .5h5.500v12H9L7.500 14 6 12.500H.5zM7.500 2v12"/></svg></button>
      <button aria-label="Web版式"><svg width="15" height="15"><circle cx="7.500" cy="7.500" r="7"/><path d="M7.500.5v14M.5 7.500h14M2 4h11M2 11h11M7.500.5c-5 4-5 10 0 14M7.500.5c5 4 5 10 0 14"/></svg></button>
      <button aria-label="写作模式"><svg width="16" height="15"><path d="M0 14.500h14M1 13l1-4.500L11 0l4 3-9 9zM2 8.500L6 12M9 2l4 3"/></svg></button>
    </div>
    <i class="rule mx-2"></i>
    <button class="ms-2" aria-label="适合页面"><svg width="14" height="14"><path d="M.5 4V.5H4M10 .5h3.500V4M13.500 10v3.500H10M4 13.500H.5V10M3.500 3.500h7v7h-7z"/></svg></button>
    <button class="d-flex align-items-center ms-2 me-2 pe-1" style="gap:5px">80%<i class="tri"></i></button>
    <button aria-label="缩小"><svg width="10" height="2"><path d="M0 1h10" stroke-width="2"/></svg></button>
    <input class="zoomer ms-2 me-1" type="range" min="0" max="100" value="36" aria-label="显示比例">
    <button class="me-1" aria-label="放大"><svg width="10" height="10"><path d="M5 0v10M0 5h10" stroke-width="2"/></svg></button>
    <button class="ms-2" aria-label="全屏"><svg width="14" height="14"><path d="M.5 4V.5H4M10 .5h3.500V4M13.500 10v3.500H10M4 13.500H.5V10M1 1l4 4M13 1L9 5M1 13l4-4M13 13L9 9"/></svg></button>
  </div>
</footer>

<svg class="pointer pic" width="30" height="120"><path d="M20 0L25 28 20.500 27 11 117H7.500L17 26.500 12 27z" fill="#f00"/></svg>

<div class="ime d-flex align-items-center justify-content-center"><span>CH</span><svg width="11" height="12"><path d="M5 .5c7 2 6 11-4 10.500C5 9 7 5 5 .5z"/></svg><span>简</span></div>

<div class="brand d-flex align-items-center">
  <svg class="pic" width="44" height="42" viewBox="0 0 44 42"><defs><linearGradient id="ga" x2="0" y2="1"><stop stop-color="#3fb7ec"/><stop offset="1" stop-color="#3168ba"/></linearGradient><linearGradient id="gb" x1="1" x2="0" y2="1"><stop stop-color="#2fad66"/><stop offset="1" stop-color="#c9dc3c"/></linearGradient></defs><path d="M43 1C22-2 0 12 1 25c0 5 4 8 9 9C3 22 17 7 43 1z" fill="url(#ga)"/><path d="M7 26c1-10 13-15 20-9 4 5-2 12-9 11 7-1 9-6 5-9-6-2-12 2-12 8z" fill="url(#ga)"/><path d="M26 15c8-2 15 1 15 8 0 12-17 19-31 17 14-2 30-13 16-25z" fill="url(#gb)"/></svg>
  <div><div class="brand-cn">极光下载站</div><div class="brand-en">www.xz7.com</div></div>
</div>
</body>
</html>
